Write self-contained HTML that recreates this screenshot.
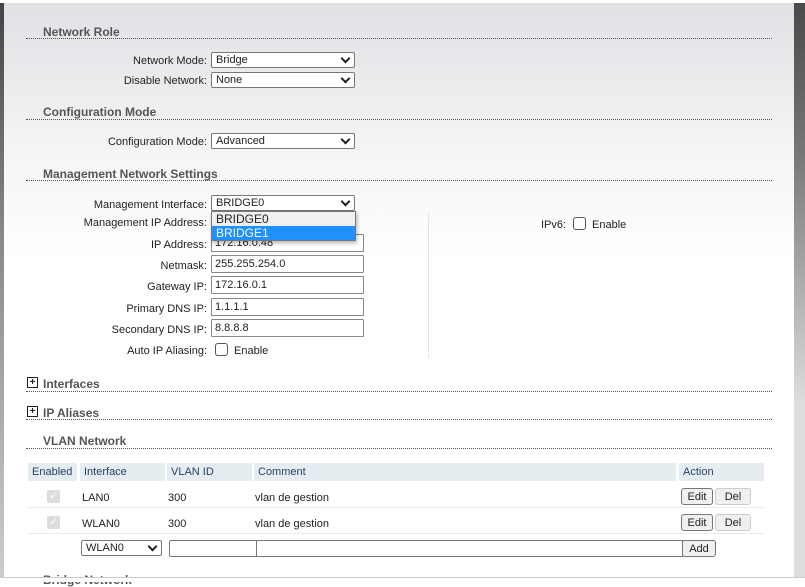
<!DOCTYPE html>
<html><head><meta charset="utf-8"><style>
*{box-sizing:border-box;margin:0;padding:0}
body{width:805px;height:582px;overflow:hidden;background:#fff;font-family:"Liberation Sans",sans-serif;font-size:11px;color:#222;position:relative}
.bg{position:absolute;left:4px;top:3px;width:790px;height:575px;background:linear-gradient(#dfe1e4 0px,#f4f5f6 150px,#fff 260px)}
.lbar{position:absolute;left:0;top:3px;width:4px;height:575px;background:linear-gradient(#444,#888 40%,#ccc)}
.rbar{position:absolute;left:794px;top:3px;width:11px;height:575px;background:linear-gradient(#4a4a4a 0px,#777 150px,#ddd 400px,#ddd)}
.bot{position:absolute;left:0;top:577px;width:805px;height:1px;background:#ccc}
.a{position:absolute;white-space:nowrap}
.h{position:absolute;left:43px;font-weight:bold;font-size:12px;color:#555}
.ln{position:absolute;left:26px;width:746px;border-top:1px dotted #555}
.lab{position:absolute;right:598px;text-align:right;white-space:nowrap}
.sel{position:absolute;left:211px;width:144px;height:16px;border:1px solid #777;border-radius:2px;background:#fff;padding-left:4px;line-height:15px}
.sel:after{content:"";position:absolute;right:5px;top:2px;width:5px;height:5px;border-right:2px solid #222;border-bottom:2px solid #222;transform:rotate(45deg)}
.inp{position:absolute;left:211px;width:153px;height:18px;border:1px solid #888;border-radius:1px;background:#fff;padding-left:3px;line-height:17px}
.cb{position:absolute;width:13px;height:13px;border:1px solid #555;border-radius:3px;background:#fff}
.plus{position:absolute;left:27px;width:11px;height:11px;border:1px solid #222;font-size:10px;line-height:9px;text-align:center;font-weight:bold}
.th{position:absolute;top:463px;height:18px;background:#e6edf0;color:#27406a;line-height:19px;padding-left:4px}
.rl{position:absolute;height:1px;background:#e6edf0}
.btn{position:absolute;height:17px;border:1px solid #777;border-radius:3px;background:#f0f0f0;text-align:center;line-height:16px}
.dcb{position:absolute;left:47px;width:13px;height:13px;background:#ddd;border-radius:2px;color:#fff;font-size:10px;line-height:13px;text-align:center}
</style></head><body>
<div class="bg"></div><div class="lbar"></div><div class="rbar"></div><div class="bot"></div>

<div class="h" style="top:25px">Network Role</div><div class="ln" style="top:38px"></div>
<div class="lab" style="top:55px">Network Mode:</div><div class="sel" style="top:52px">Bridge</div>
<div class="lab" style="top:75px">Disable Network:</div><div class="sel" style="top:72px">None</div>

<div class="h" style="top:105px">Configuration Mode</div><div class="ln" style="top:119px"></div>
<div class="lab" style="top:136px">Configuration Mode:</div><div class="sel" style="top:133px">Advanced</div>

<div class="h" style="top:167px">Management Network Settings</div><div class="ln" style="top:180px"></div>
<div class="lab" style="top:199px">Management Interface:</div><div class="sel" style="top:195px">BRIDGE0</div>
<div class="lab" style="top:217px">Management IP Address:</div>
<div class="lab" style="top:239px">IP Address:</div><div class="inp" style="top:234px">172.16.0.48</div>
<div class="lab" style="top:260px">Netmask:</div><div class="inp" style="top:255px">255.255.254.0</div>
<div class="lab" style="top:281px">Gateway IP:</div><div class="inp" style="top:276px">172.16.0.1</div>
<div class="lab" style="top:303px">Primary DNS IP:</div><div class="inp" style="top:298px">1.1.1.1</div>
<div class="lab" style="top:324px">Secondary DNS IP:</div><div class="inp" style="top:319px">8.8.8.8</div>
<div class="lab" style="top:345px">Auto IP Aliasing:</div><div class="cb" style="left:215px;top:343px"></div><div class="a" style="left:234px;top:345px">Enable</div>
<div class="a" style="left:428px;top:213px;height:145px;border-left:1px dotted #ccd"></div>
<div class="a" style="left:541px;top:219px">IPv6:</div><div class="cb" style="left:573px;top:217px"></div><div class="a" style="left:592px;top:219px">Enable</div>

<div class="a" style="left:211px;top:211px;width:145px;height:30px;border:1px solid #777;background:#f0f0f0;box-shadow:1px 2px 4px rgba(0,0,0,.3);font-size:12px">
<div style="height:14px;line-height:14px;padding-left:4px">BRIDGE0</div>
<div style="height:14px;line-height:14px;padding-left:4px;background:#1e90ff;color:#fff">BRIDGE1</div></div>

<div class="plus" style="top:377px">+</div><div class="h" style="top:377px">Interfaces</div><div class="ln" style="top:391px"></div>
<div class="plus" style="top:406px">+</div><div class="h" style="top:406px">IP Aliases</div><div class="ln" style="top:419px"></div>
<div class="h" style="top:434px">VLAN Network</div><div class="ln" style="top:448px"></div>

<div class="th" style="left:28px;width:49px">Enabled</div>
<div class="th" style="left:80px;width:85px">Interface</div>
<div class="th" style="left:167px;width:85px">VLAN ID</div>
<div class="th" style="left:254px;width:422px">Comment</div>
<div class="th" style="left:679px;width:85px">Action</div>

<div class="dcb" style="top:490px">✓</div>
<div class="a" style="left:82px;top:492px">LAN0</div><div class="a" style="left:168px;top:492px">300</div><div class="a" style="left:255px;top:492px">vlan de gestion</div>
<div class="btn" style="left:681px;top:488px;width:32px">Edit</div><div class="btn" style="left:715px;top:488px;width:36px;border-color:#ccc">Del</div>
<div class="rl" style="left:28px;top:507px;width:736px"></div>
<div class="dcb" style="top:516px">✓</div>
<div class="a" style="left:82px;top:518px">WLAN0</div><div class="a" style="left:168px;top:518px">300</div><div class="a" style="left:255px;top:518px">vlan de gestion</div>
<div class="btn" style="left:681px;top:514px;width:32px">Edit</div><div class="btn" style="left:715px;top:514px;width:36px;border-color:#ccc">Del</div>
<div class="rl" style="left:28px;top:533px;width:736px"></div>

<div class="sel" style="left:81px;top:540px;width:81px">WLAN0</div>
<div class="a" style="left:169px;top:540px;width:88px;height:17px;border:1px solid #777;background:#fff;border-radius:2px 0 0 2px"></div>
<div class="a" style="left:256px;top:540px;width:427px;height:17px;border:1px solid #777;background:#fff"></div>
<div class="btn" style="left:682px;top:540px;width:34px">Add</div>

<div class="h" style="top:573px">Bridge Network</div>
<div class="bot"></div>
<div class="a" style="left:0;top:578px;width:805px;height:4px;background:#fff"></div>
</body></html>
